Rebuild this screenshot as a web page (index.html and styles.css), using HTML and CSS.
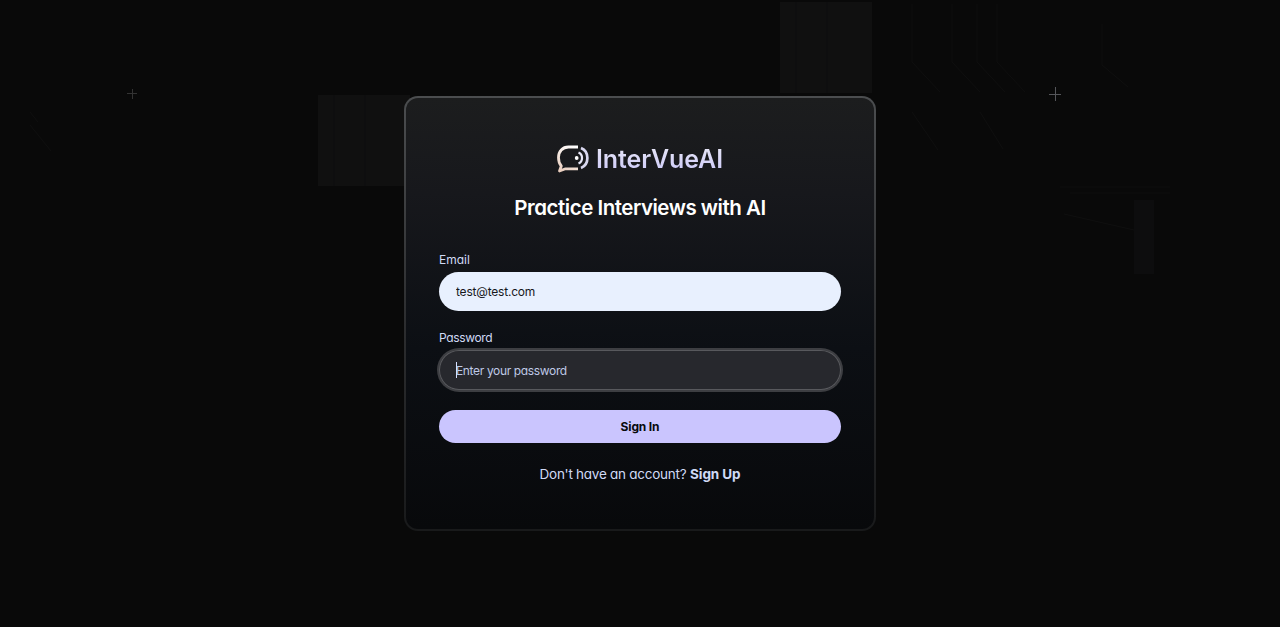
FILE: index.html
```
<!DOCTYPE html>
<html lang="en">
<head>
<meta charset="utf-8">
<title>InterVueAI</title>
<link rel="stylesheet" href="styles.css">
</head>
<body>
<main class="page">
  <svg class="pattern" width="1280" height="627" viewBox="0 0 1280 627" aria-hidden="true">
    <rect class="tile" x="780" y="2" width="92" height="91"/>
    <rect class="tile" x="318" y="95" width="92" height="91"/>
    <path class="tile-line" d="M796 2V93M827 2V93M334 95V186M365 95V186"/>
    <path class="faint" d="M1134 200h20v74h-20z"/>
    <path class="trace" d="M912 4V62L940 92M952 4V62L980 92M977 4V62L1005 92M997 4V62L1025 92M1102 24V65L1128 87M980 112L1003 149M912 112L938 150M30 125L51 151M30 112L38 122M1060 187h110M1064 214l70 16M1070 193h100"/>
    <path class="spark" d="M1049 94.500h12M1055.500 87v14"/>
    <path class="spark dim" d="M127 93.500h10M132.500 89v10"/>
  </svg>
  <section class="card">
    <div class="brand">
      <svg class="logo" width="32" height="28" viewBox="0 0 32 28" fill="none" aria-hidden="true">
        <defs>
          <linearGradient id="bubble" x1="18" y1="1" x2="4" y2="27" gradientUnits="userSpaceOnUse">
            <stop offset="0" stop-color="#fff"/><stop offset="1" stop-color="#e9cdbd"/>
          </linearGradient>
        </defs>
        <path d="M21 2H11.500C5.500 2 1.500 6.500 1.500 12.500C1.500 16 2.300 18.800 4.300 21L2.500 26L8.500 23.800H21" stroke="url(#bubble)" stroke-width="2.800" stroke-linejoin="round"/>
        <circle cx="19.700" cy="13" r="1.900" fill="#fff"/>
        <path d="M21.500 7.500C26.200 9.500 26.200 16.500 21.500 18.500" stroke="#e8e7f8" stroke-width="2.200"/>
        <path d="M24 3C32.500 6.500 32.500 19.500 24 23" stroke="#d8d7ef" stroke-width="2.700"/>
      </svg>
      <h2 class="name">InterVueAI</h2>
    </div>
    <h3 class="title">Practice Interviews with AI</h3>
    <form class="form">
      <div class="field">
        <label class="label" for="email">Email</label>
        <input class="input filled" id="email" type="text" value="test@test.com">
      </div>
      <div class="field">
        <label class="label password-label" for="password">Password</label>
        <div class="control">
          <input class="input focused" id="password" type="password" placeholder="Enter your password">
          <span class="caret"></span>
        </div>
      </div>
      <button class="submit" type="button">Sign In</button>
    </form>
    <p class="switch"><span class="question">Don't have an account?</span> <a class="link">Sign Up</a></p>
  </section>
</main>
</body>
</html>
```
FILE: styles.css
```
* { box-sizing: border-box; }
body {
  margin: 0;
  background: #090909;
  color: #d0daf5;
  font-family: Inter, "Liberation Sans", sans-serif;
  font-feature-settings: "cv11" 1;
}
.page {
  position: relative;
  display: flex;
  justify-content: center;
  height: 627px;
  padding-top: 96px;
  overflow: hidden;
}
.pattern { position: absolute; inset: 0; fill: none; }
.tile { fill: #101010; }
.tile-line { stroke: #0c0c0e; }
.faint { fill: #0d0d0e; }
.trace { stroke: #0f0f0f; }
.spark { stroke: #55565a; }
.dim { stroke: #333; }
.card {
  position: relative;
  width: 472px;
  height: 435px;
  padding: 47px 33px 0;
  border: 2px solid transparent;
  border-radius: 14px;
  background:
    linear-gradient(180deg, #1c1d1e 0%, #17181c 22%, #0c0f14 58%, #08090b 100%) padding-box,
    linear-gradient(180deg, #4b4d4f 0%, #2b2c2e 55%, #191a1b 100%) border-box;
}
.brand { display: flex; justify-content: center; gap: 7px; height: 28px; }
.logo { flex: none; }
.name {
  margin: 0;
  font-size: 25px;
  line-height: 29px;
  font-weight: 600;
  letter-spacing: -0.1px;
  background: linear-gradient(180deg, #e9e8f6, #cbc8f8);
  -webkit-background-clip: text;
  background-clip: text;
  color: transparent;
}
.title {
  margin: 21px 0 0;
  text-align: center;
  font-size: 20.500px;
  line-height: 28px;
  font-weight: 600;
  letter-spacing: -0.48px;
  color: #fff;
}
.form { display: flex; flex-direction: column; gap: 18px; margin-top: 29px; }
.field { display: flex; flex-direction: column; gap: 4px; }
.label { font-size: 12px; line-height: 17px; }
.password-label { letter-spacing: -0.35px; }
.control { position: relative; display: flex; }
.input {
  width: 100%;
  height: 39px;
  padding: 0 17px;
  border: 0;
  border-radius: 20px;
  outline: 0;
  font: inherit;
  font-size: 12px;
  letter-spacing: -0.2px;
}
.filled { background: #e8f0fe; color: #17181c; }
.focused {
  height: 40px;
  background: #27282d;
  color: #d6e0ff;
  letter-spacing: -0.35px;
  box-shadow: inset 0 0 0 1px #58595d, 0 0 0 2px #3d3e42;
}
.focused::placeholder { color: #bfc9e6; opacity: 1; }
.caret { position: absolute; left: 17px; top: 12px; width: 1px; height: 16px; background: #d6e0ff; }
.submit {
  height: 33px;
  margin-top: 2px;
  border: 0;
  border-radius: 17px;
  background: #cac5fe;
  color: #08090d;
  font: inherit;
  font-size: 12px;
  font-weight: 700;
  letter-spacing: -0.15px;
}
.switch { margin: 21px 0 0; text-align: center; font-size: 13.500px; line-height: 20px; }
.question { letter-spacing: -0.26px; }
.link { font-weight: 700; letter-spacing: -0.1px; }
```
